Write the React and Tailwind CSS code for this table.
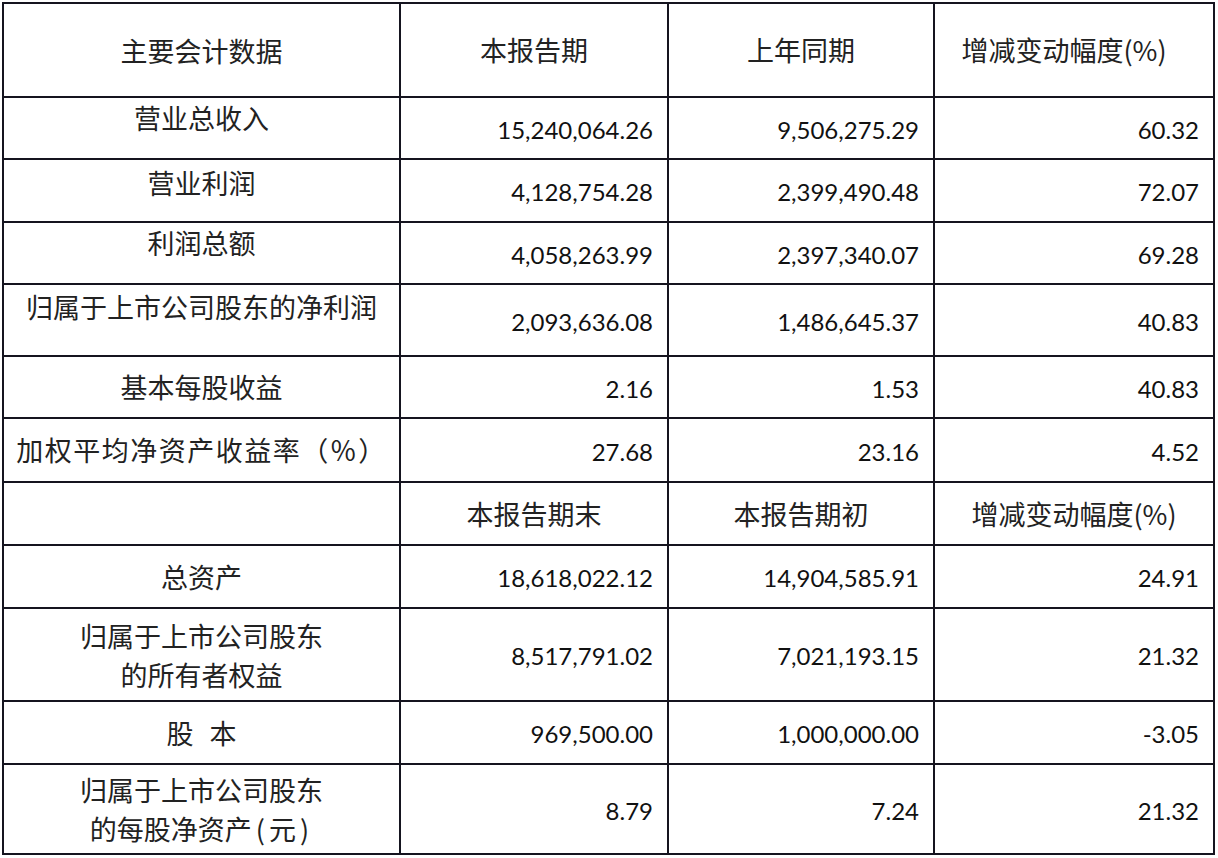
import React from "react";

const CJK = "font-['Noto_Sans_CJK_SC',sans-serif]";
const NUM = "font-['Lato',sans-serif]";

const rows = [
  { label: "营业总收入", lp: "items-start pt-[4px]", v: ["15,240,064.26", "9,506,275.29", "60.32"] },
  { label: "营业利润", lp: "items-start pt-[7px]", v: ["4,128,754.28", "2,399,490.48", "72.07"] },
  { label: "利润总额", lp: "items-start pt-[4px]", v: ["4,058,263.99", "2,397,340.07", "69.28"] },
  { label: "归属于上市公司股东的净利润", lp: "items-start pt-[6px]", v: ["2,093,636.08", "1,486,645.37", "40.83"] },
  { label: "基本每股收益", lp: "items-center", v: ["2.16", "1.53", "40.83"] },
  { label: "加权平均净资产收益率（％）", lp: "items-center tracking-[1.5px]", v: ["27.68", "23.16", "4.52"] },
];

function Cell({ className = "", children }) {
  return (
    <div className={`flex min-h-0 overflow-hidden border-r-2 border-b-2 border-[#15141f] ${className}`}>
      {children}
    </div>
  );
}

function Label({ children, className = "" }) {
  return (
    <Cell className={`justify-center ${className}`}>
      <div className={`${CJK} text-[27px] leading-[32px] text-[#222] text-center`}>{children}</div>
    </Cell>
  );
}

function Num({ children }) {
  return (
    <Cell className="items-center justify-end pr-[14px] pt-[3px]">
      <span className={`${NUM} text-[24px] leading-[30px] text-[#111]`}>{children}</span>
    </Cell>
  );
}

function Head({ children, className = "" }) {
  return (
    <Cell className={`items-center justify-center ${className}`}>
      <span className={`${CJK} text-[27px] leading-[32px] text-[#222]`}>{children}</span>
    </Cell>
  );
}

function Paren({ children }) {
  return <span className="px-[4px]">{children}</span>;
}

const rows2 = [
  { label: ["总资产"], v: ["18,618,022.12", "14,904,585.91", "24.91"] },
  { label: ["归属于上市公司股东", "的所有者权益"], v: ["8,517,791.02", "7,021,193.15", "21.32"] },
  { label: null, v: ["969,500.00", "1,000,000.00", "-3.05"] },
  {
    label: [
      "归属于上市公司股东",
      <>
        的每股净资产<Paren>(</Paren>元<Paren>)</Paren>
      </>,
    ],
    v: ["8.79", "7.24", "21.32"],
  },
];

export default function App() {
  return (
    <div className="w-[1218px] h-[858px] bg-white overflow-hidden pl-[2px] pt-[2px]">
      <div className="w-[1213px] border-t-2 border-l-2 border-[#15141f] grid grid-cols-[397px_268px_266px_280px] grid-rows-[94px_62px_63px_62px_72px_62px_64px_63px_63px_93px_63px_90px]">
        <Cell className="items-center justify-center pt-[2px]">
          <span className={`${CJK} text-[27px] leading-[32px] text-[#222]`}>主要会计数据</span>
        </Cell>
        <Head>本报告期</Head>
        <Head>上年同期</Head>
        <Head className="pr-[20px]">增减变动幅度(%)</Head>

        {rows.map((r, i) => (
          <React.Fragment key={i}>
            <Label className={r.lp}>{r.label}</Label>
            {r.v.map((x, j) => (
              <Num key={j}>{x}</Num>
            ))}
          </React.Fragment>
        ))}

        <Cell />
        <Head>本报告期末</Head>
        <Head>本报告期初</Head>
        <Head>增减变动幅度(%)</Head>

        {rows2.map((r, i) => (
          <React.Fragment key={i}>
            <Label className="items-center">
              {r.label ? (
                r.label.map((l, k) => (
                  <div key={k} className="leading-[39px]">{l}</div>
                ))
              ) : (
                <span>
                  <span className="mr-[16px]">股</span>本
                </span>
              )}
            </Label>
            {r.v.map((x, j) => (
              <Num key={j}>{x}</Num>
            ))}
          </React.Fragment>
        ))}
      </div>
    </div>
  );
}
